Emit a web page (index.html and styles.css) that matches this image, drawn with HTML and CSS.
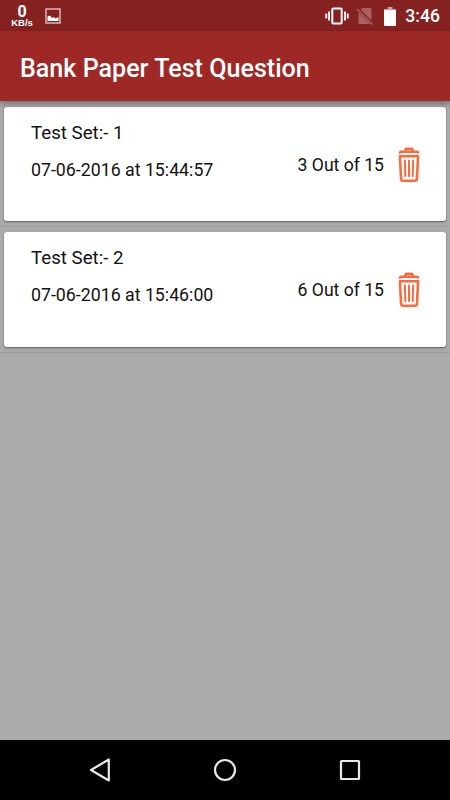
FILE: index.html
```html
<!DOCTYPE html>
<html lang="en">
<head>
<meta charset="UTF-8" />
<meta name="viewport" content="width=device-width, initial-scale=1" />
<title>Bank Paper Test Question</title>
<link rel="stylesheet" href="styles.css">
</head>
<body>

<div class="status-bar">
  <div class="net-speed">
    <span class="net-value">0</span>
    <span class="net-unit">KB/s</span>
  </div>
  <svg class="picture-icon" width="16" height="16" viewBox="0 0 16 16">
    <rect x="1" y="1" width="14" height="14" fill="none" stroke="#e6cccc" stroke-width="1.3" />
    <path d="M2.500 13V8.500L5 7.500l2 2.500 2-1 1.500 1.500L13.500 9v4z" fill="#fff" />
  </svg>
  <div class="status-right">
    <svg class="vibrate-icon" width="24" height="18" viewBox="0 0 24 18">
      <rect x="7.300" y="1.500" width="9.400" height="15" rx="1" fill="none" stroke="#fff" stroke-width="2" />
      <path d="M4 4.500v9M20 4.500v9M1.200 6.500v5M22.800 6.500v5" stroke="#f3e6e6" stroke-width="2" />
    </svg>
    <svg class="sim-icon" width="18" height="18" viewBox="0 0 18 18">
      <path d="M6.500 1H14q1.500 0 1.500 1.500V13.500L4.700 2.800zM2.500 5.200L14.300 17H4q-1.500 0-1.500-1.500z" fill="#a96061" />
      <path d="M1 2l15.500 15.500" stroke="#a96061" stroke-width="1.500" />
    </svg>
    <svg class="battery-icon" width="12" height="19" viewBox="0 0 12 19">
      <path d="M3.500 0h5v2H12v2H0V2h3.500z" fill="#c79c9b" />
      <path d="M0 3h12v15q0 1-1 1H1q-1 0-1-1z" fill="#fff" />
    </svg>
    <span class="clock">3:46</span>
  </div>
</div>

<div class="app-bar">
  <h1>Bank Paper Test Question</h1>
</div>

<div class="list">
  <div class="list-item">
    <div class="card">
      <div class="info">
        <div class="set-name">Test Set:- 1</div>
        <div class="set-date">07-06-2016 at 15:44:57</div>
      </div>
      <div class="score">3 Out of 15</div>
      <svg class="trash" width="22" height="36" viewBox="0 0 22 36">
        <path d="M7.500 4V2.800q0-1.100 1.100-1.100h4.800q1.100 0 1.100 1.100V4M2 5.600L3 4.800h16l1 .4" />
        <path d="M1.900 9.300h18.200L18.900 32q-.1 1.700-2 1.700H5.100q-1.900 0-2-1.700z" />
        <path class="ribs" d="M6.900 13.500l.4 15.500M11 13.500V29M15.100 13.500L14.700 29" />
      </svg>
    </div>
  </div>

  <div class="list-item">
    <div class="card">
      <div class="info">
        <div class="set-name">Test Set:- 2</div>
        <div class="set-date">07-06-2016 at 15:46:00</div>
      </div>
      <div class="score">6 Out of 15</div>
      <svg class="trash" width="22" height="36" viewBox="0 0 22 36">
        <path d="M7.500 4V2.800q0-1.100 1.100-1.100h4.800q1.100 0 1.100 1.100V4M2 5.600L3 4.800h16l1 .4" />
        <path d="M1.900 9.300h18.200L18.900 32q-.1 1.700-2 1.700H5.100q-1.900 0-2-1.700z" />
        <path class="ribs" d="M6.900 13.500l.4 15.500M11 13.500V29M15.100 13.500L14.700 29" />
      </svg>
    </div>
  </div>
</div>

<div class="nav-bar">
  <svg width="24" height="26" viewBox="0 0 24 26">
    <path d="M20.800 2.500v21L3 13z" />
  </svg>
  <svg width="24" height="26" viewBox="0 0 24 26">
    <circle cx="12" cy="13" r="10" />
  </svg>
  <svg width="24" height="26" viewBox="0 0 24 26">
    <rect x="3" y="4" width="18" height="18" rx=".5" />
  </svg>
</div>

</body>
</html>
```

FILE: styles.css
```css
* {
  box-sizing: border-box;
}
body {
  margin: 0;
  height: 800px;
  display: flex;
  flex-direction: column;
  background: #aaa;
  color: #111;
  font-family: Roboto, sans-serif;
  overflow: hidden;
}
.status-bar {
  height: 31px;
  display: flex;
  align-items: center;
  padding: 1px 10px 0 11px;
  background: #852221;
  color: #fff;
}
.net-speed {
  width: 22px;
  display: flex;
  flex-direction: column;
  align-items: center;
  font-weight: bold;
}
.net-value {
  font-size: 16px;
  line-height: 12px;
}
.net-unit {
  font-family: "Liberation Sans", Arial, sans-serif;
  font-size: 9.5px;
  line-height: 9px;
}
.picture-icon {
  margin-left: 12px;
}
.status-right {
  margin-left: auto;
  display: flex;
  align-items: center;
}
.sim-icon {
  margin-left: 7px;
}
.battery-icon {
  margin-left: 10px;
}
.clock {
  margin-left: 9px;
  font-size: 17.6px;
  font-weight: 500;
  line-height: 30px;
}
.app-bar {
  position: relative;
  height: 70px;
  display: flex;
  align-items: center;
  padding: 4px 20px 0;
  background: #9e2825;
  box-shadow: 0 3px 6px rgba(0,0,0,0.35);
}
.app-bar h1 {
  margin: 0;
  color: #fff;
  font-size: 25.1px;
  font-weight: 500;
}
.list {
  flex: 1;
}
.list-item {
  height: 125.8px;
  padding: 5.5px 4px 0;
  border-bottom: 1px solid #9d9d9d;
}
.card {
  height: 114.5px;
  display: flex;
  align-items: flex-start;
  padding: 0 26px 0 27px;
  background: #fff;
  border-radius: 3px;
  box-shadow: 0 1px 2px rgba(0,0,0,0.45);
}
.info {
  flex: 1;
  padding-top: 14px;
}
.set-name {
  font-size: 18.7px;
  line-height: 24px;
}
.set-date {
  margin-top: 13px;
  font-size: 17.75px;
  line-height: 24px;
}
.score {
  padding-top: 46px;
  font-size: 17.6px;
  line-height: 24px;
}
.trash {
  margin: 40px 0 0 14px;
  fill: none;
  stroke: #fb6a3c;
  stroke-width: 2.6;
  stroke-linecap: round;
  stroke-linejoin: round;
}
.trash .ribs {
  stroke-width: 2;
}
.nav-bar {
  height: 60px;
  display: flex;
  align-items: center;
  justify-content: space-between;
  padding: 0 88px;
  background: #000;
}
.nav-bar svg {
  fill: none;
  stroke: #e9e9e9;
  stroke-width: 2.2;
  stroke-linejoin: round;
}
```
